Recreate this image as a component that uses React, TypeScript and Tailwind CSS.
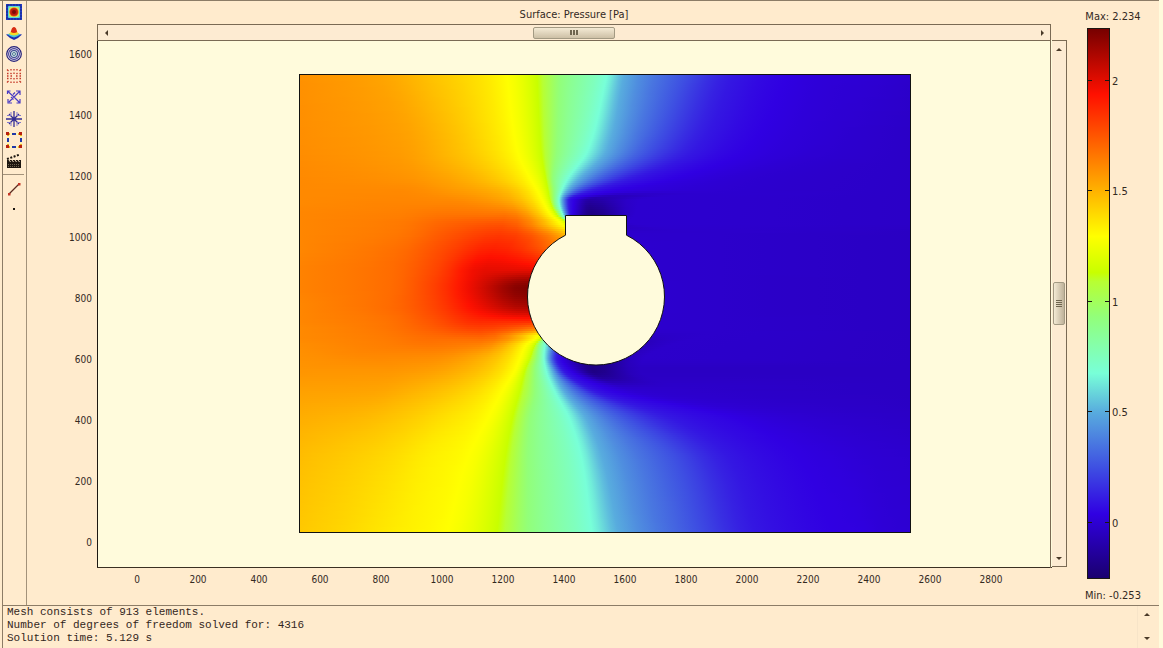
import type { ReactNode } from "react";

type Point = [x: number, value: number];
type Rgb = [number, number, number];

interface FieldRow {
  y: number;
  left: Point[];
  bands: number[];
  tail: Point[];
  // pressure on the body surface, where it differs from the first band
  edge?: number;
}

const P_MAX = 2.234;
const P_MIN = -0.253;

const FIELD_W = 611;
const FIELD_H = 458;
const STRIP = 2;

const COLOR_MAP: { value: number; rgb: Rgb }[] = [
  { value: 2.234, rgb: [118, 0, 0] },
  { value: 1.936, rgb: [255, 16, 0] },
  { value: 1.294, rgb: [255, 255, 0] },
  { value: 1.13, rgb: [200, 255, 0] },
  { value: 1.09, rgb: [184, 255, 50] },
  { value: 0.93, rgb: [146, 255, 122] },
  { value: 0.675, rgb: [120, 255, 216] },
  { value: 0.5, rgb: [88, 172, 222] },
  { value: 0.25, rgb: [62, 80, 226] },
  { value: 0.038, rgb: [48, 0, 226] },
  { value: -0.253, rgb: [26, 0, 110] },
];

const BAND_LEVELS = [1.294, 1.13, 0.93, 0.675, 0.5, 0.25, 0.1, 0.038];
const BEHIND_BODY = [280, 284, 288, 292, 296, 300, 304];

const ROWS: FieldRow[] = [
  { y: 0, left: [[0, 1.59], [80, 1.54], [130, 1.46], [170, 1.39]], bands: [207, 237, 260, 307, 324, 385, 433, 488], tail: [[530, 0.01], [570, 0], [611, -0.02]] },
  { y: 75, left: [[0, 1.6], [100, 1.56], [150, 1.48], [185, 1.4]], bands: [217, 241, 257, 288, 307, 350, 395, 445], tail: [[490, 0.01], [540, -0.01], [611, -0.03]] },
  { y: 105, left: [[0, 1.61], [100, 1.59], [150, 1.54], [195, 1.45]], bands: [231, 246, 253, 267, 278, 302, 328, 368], tail: [[405, 0.01], [460, -0.01], [611, -0.03]] },
  { y: 115, left: [[0, 1.61], [100, 1.61], [150, 1.57], [198, 1.5]], bands: [237, 248, 254, 262, 268, 280, 294, 318], tail: [[360, 0.01], [440, -0.01], [611, -0.03]] },
  { y: 125, left: [[0, 1.61], [100, 1.62], [150, 1.61], [200, 1.55]], bands: [242, 250, 254, 259, 262, 266, 269, 274], tail: [[290, -0.12], [340, -0.01], [611, -0.03]] },
  { y: 140, left: [[0, 1.62], [100, 1.64], [150, 1.67], [205, 1.67]], bands: [251, 257, 260, 263, 265, 268, 270, 273], tail: [[292, -0.2], [335, -0.01], [611, -0.03]] },
  { y: 147, left: [[0, 1.62], [98, 1.65], [150, 1.71], [203, 1.74]], bands: [259, 266, 268, 270, 272, 274, 276, 278], tail: [[296, -0.1], [330, -0.01], [611, -0.03]] },
  { y: 160, left: [[0, 1.62], [97, 1.66], [147, 1.75], [200, 1.83]], edge: 1.5, bands: [264, ...BEHIND_BODY], tail: [[310, -0.01], [420, -0.02], [611, -0.04]] },
  { y: 175, left: [[0, 1.62], [95, 1.68], [143, 1.78], [193, 1.9]], edge: 1.72, bands: [249, ...BEHIND_BODY], tail: [[310, 0], [420, -0.02], [611, -0.04]] },
  { y: 195, left: [[0, 1.63], [92, 1.69], [138, 1.8], [185, 1.99]], edge: 1.99, bands: [236, ...BEHIND_BODY], tail: [[310, 0], [420, -0.02], [611, -0.04]] },
  { y: 213, left: [[0, 1.63], [90, 1.69], [135, 1.81], [180, 2.02]], edge: 2.21, bands: [226, ...BEHIND_BODY], tail: [[310, 0.01], [420, -0.02], [611, -0.04]] },
  { y: 230, left: [[0, 1.62], [88, 1.69], [135, 1.8], [180, 1.98]], edge: 2.13, bands: [227, ...BEHIND_BODY], tail: [[310, 0.01], [420, -0.02], [611, -0.04]] },
  { y: 245, left: [[0, 1.62], [86, 1.67], [133, 1.76], [180, 1.88]], edge: 1.9, bands: [229, ...BEHIND_BODY], tail: [[310, 0], [420, -0.02], [611, -0.04]] },
  { y: 255, left: [[0, 1.61], [85, 1.66], [130, 1.72], [180, 1.79]], edge: 1.6, bands: [233, 256, 260, 264, 268, 272, 276, 280], tail: [[310, -0.01], [420, -0.02], [611, -0.04]] },
  { y: 262, left: [[0, 1.61], [85, 1.65], [130, 1.69], [182, 1.71]], bands: [236, 243, 246, 250, 254, 260, 265, 270], tail: [[305, -0.06], [400, -0.02], [611, -0.04]] },
  { y: 270, left: [[0, 1.6], [85, 1.64], [130, 1.66], [180, 1.63]], bands: [226, 235, 239, 245, 250, 256, 260, 265], tail: [[300, -0.15], [370, -0.02], [611, -0.04]] },
  { y: 283, left: [[0, 1.59], [80, 1.61], [130, 1.6], [175, 1.53]], bands: [220, 230, 237, 244, 248, 253, 257, 262], tail: [[292, -0.2], [345, -0.02], [611, -0.04]] },
  { y: 295, left: [[0, 1.58], [80, 1.58], [125, 1.56], [165, 1.5]], bands: [215, 225, 235, 246, 252, 258, 263, 270], tail: [[293, -0.2], [340, -0.04], [611, -0.04]] },
  { y: 315, left: [[0, 1.55], [75, 1.54], [115, 1.5], [155, 1.44]], bands: [203, 220, 235, 254, 263, 280, 292, 310], tail: [[335, -0.01], [390, -0.02], [611, -0.04]] },
  { y: 345, left: [[0, 1.51], [60, 1.48], [100, 1.44], [140, 1.38]], bands: [187, 212, 230, 270, 287, 330, 375, 440], tail: [[480, 0.01], [530, -0.01], [611, -0.03]] },
  { y: 385, left: [[0, 1.47], [50, 1.43], [90, 1.39], [125, 1.34]], bands: [167, 205, 228, 282, 303, 375, 430, 500], tail: [[535, 0.02], [575, 0], [611, -0.01]] },
  { y: 458, left: [[0, 1.44], [45, 1.4], [80, 1.36], [110, 1.33]], bands: [147, 197, 228, 292, 318, 397, 455, 533], tail: [[560, 0.03], [585, 0.01], [611, 0]] },
];

function toPoints(row: FieldRow): Point[] {
  const bands = row.bands.map(
    (x, i): Point => [x, i === 0 && row.edge !== undefined ? row.edge : BAND_LEVELS[i]],
  );
  return [...row.left, ...bands, ...row.tail];
}

// Monotone cubic interpolation, so the contours do not overshoot
function interpolate(xs: number[], ys: number[]) {
  const n = xs.length;
  const h = xs.slice(1).map((x, i) => Math.max(x - xs[i], 0.001));
  const d = h.map((step, i) => (ys[i + 1] - ys[i]) / step);
  const m = xs.map((_, i) => {
    if (i === 0) return d[0];
    if (i === n - 1) return d[n - 2];
    if (d[i - 1] * d[i] <= 0) return 0;
    const w1 = 2 * h[i] + h[i - 1];
    const w2 = h[i] + 2 * h[i - 1];
    return (w1 + w2) / (w1 / d[i - 1] + w2 / d[i]);
  });
  return (x: number) => {
    let i = 0;
    while (i < n - 2 && x > xs[i + 1]) i++;
    const t = (x - xs[i]) / h[i];
    const t2 = t * t;
    const t3 = t2 * t;
    return (
      (2 * t3 - 3 * t2 + 1) * ys[i] +
      (t3 - 2 * t2 + t) * h[i] * m[i] +
      (3 * t2 - 2 * t3) * ys[i + 1] +
      (t3 - t2) * h[i] * m[i + 1]
    );
  };
}

function colorOf(value: number): string {
  const v = Math.min(P_MAX, Math.max(P_MIN, value));
  let i = 0;
  while (i < COLOR_MAP.length - 2 && v < COLOR_MAP[i + 1].value) i++;
  const a = COLOR_MAP[i];
  const b = COLOR_MAP[i + 1];
  const t = (a.value - v) / (a.value - b.value);
  const [r, g, bl] = a.rgb.map((c, k) => Math.round(c + (b.rgb[k] - c) * t));
  return `rgb(${r},${g},${bl})`;
}

function buildStrips() {
  const rows = ROWS.map(toPoints);
  const ys = ROWS.map((r) => r.y);
  const columns = rows[0].map((_, c) => ({
    x: interpolate(ys, rows.map((r) => r[c][0])),
    value: interpolate(ys, rows.map((r) => r[c][1])),
  }));

  const strips = [];
  for (let y = 0; y < FIELD_H; y += STRIP) {
    const xs = columns.map((c) => c.x(y + STRIP / 2));
    const values = columns.map((c) => c.value(y + STRIP / 2));
    const valueAt = interpolate(xs, values);
    const stops = [];
    for (let i = 0; i < xs.length - 1; i++) {
      for (let k = 0; k < 4; k++) {
        const x = xs[i] + ((xs[i + 1] - xs[i]) * k) / 4;
        stops.push({ offset: x / FIELD_W, color: colorOf(valueAt(x)) });
      }
    }
    stops.push({ offset: 1, color: colorOf(values[values.length - 1]) });
    strips.push({ y, stops });
  }
  return strips;
}

const STRIPS = buildStrips();

const X_TICKS = Array.from({ length: 15 }, (_, i) => i * 200);
const Y_TICKS = Array.from({ length: 9 }, (_, i) => i * 200);
const LEGEND_TICKS = [2, 1.5, 1, 0.5, 0];

function PressurePlot() {
  return (
    <svg
      viewBox="0 0 1025 565"
      className="block h-auto min-w-0 flex-1 font-['DejaVu_Sans_Condensed','Noto_Sans',sans-serif] text-[10px]"
      role="img"
      aria-label="Pressure surface plot"
    >
      <defs>
        {STRIPS.map((s) => (
          <linearGradient
            key={s.y}
            id={`strip-${s.y}`}
            gradientUnits="userSpaceOnUse"
            x1="0"
            y1="0"
            x2={FIELD_W}
            y2="0"
          >
            {s.stops.map((stop, i) => (
              <stop key={i} offset={stop.offset} stopColor={stop.color} />
            ))}
          </linearGradient>
        ))}
      </defs>

      <rect x="70" y="0" width="955" height="528" fill="#fffbdc" />
      <path d="M70.5 0V528" stroke="#1c1813" />
      <path d="M70 527.5H1025" stroke="#3a3022" />
      <path d="M70 0.5H1024" stroke="#7a6a54" />
      <path d="M1023.5 0V528" stroke="#7a6a54" />

      <g transform="translate(273 35)">
        <g shapeRendering="crispEdges">
          {STRIPS.map((s) => (
            <rect key={s.y} y={s.y} width={FIELD_W} height={STRIP} fill={`url(#strip-${s.y})`} />
          ))}
        </g>
        <rect x="-0.5" y="-0.5" width="611" height="458" fill="none" stroke="#111" />
        <path
          d="M265.5 140.5H326.5V160.2A68.5 68.5 0 1 1 265.5 160.2Z"
          fill="#fffbdc"
          stroke="#111"
        />
      </g>

      <g fill="#33291f">
        {Y_TICKS.map((t, i) => (
          <text key={t} x="65" y={506 - i * 61} textAnchor="end">
            {t}
          </text>
        ))}
        {X_TICKS.map((t, i) => (
          <text key={t} x={110 + i * 61} y="543" textAnchor="middle">
            {t}
          </text>
        ))}
      </g>
    </svg>
  );
}

function Legend() {
  return (
    <svg
      viewBox="0 0 92 604"
      className="block w-[92px] shrink-0 self-start font-['DejaVu_Sans_Condensed','Noto_Sans',sans-serif] text-[11px]"
      role="img"
      aria-label="Pressure colour scale"
    >
      <defs>
        <linearGradient id="legend" x1="0" y1="0" x2="0" y2="1">
          {COLOR_MAP.map((c) => (
            <stop
              key={c.value}
              offset={(P_MAX - c.value) / (P_MAX - P_MIN)}
              stopColor={`rgb(${c.rgb.join(",")})`}
            />
          ))}
        </linearGradient>
      </defs>
      <rect x="20.5" y="27.5" width="22" height="550" fill="url(#legend)" stroke="#1c1813" />
      <g fill="#33291f">
        <text x="46" y="19" textAnchor="middle">Max: {P_MAX}</text>
        {LEGEND_TICKS.map((t) => {
          const y = Math.round(27 + ((P_MAX - t) / (P_MAX - P_MIN)) * 550);
          return (
            <g key={t}>
              <path d={`M21 ${y}.5H25M38 ${y}.5H42`} stroke="#1c1813" />
              <text x="45" y={y + 5}>{t}</text>
            </g>
          );
        })}
        <text x="46" y="598" textAnchor="middle">Min: {P_MIN}</text>
      </g>
    </svg>
  );
}

function Arrow({ label, d }: { label: string; d: string }) {
  return (
    <button type="button" aria-label={label} className="flex size-4 shrink-0 items-center justify-center">
      <svg viewBox="0 0 8 8" className="size-2" fill="#4a3a28">
        <path d={d} />
      </svg>
    </button>
  );
}

const UP = "M1 6L4 3L7 6Z";
const DOWN = "M1 3L4 6L7 3Z";
const LEFT = "M6 1L3 4L6 7Z";
const RIGHT = "M3 1L6 4L3 7Z";

function HorizontalScroll() {
  return (
    <div className="ml-[70px] mr-4 flex h-4 items-center justify-between border border-b-0 border-[#7a6a54] bg-[#fdebd2]">
      <Arrow label="Scroll left" d={LEFT} />
      <div className="flex h-3 w-[82px] items-center justify-center gap-px rounded-xs border border-[#a39a83] bg-linear-to-b from-[#f4ead4] to-[#cdc0a6]">
        <span className="h-[5px] w-0.5 bg-[#6f654f]" />
        <span className="h-[5px] w-0.5 bg-[#6f654f]" />
        <span className="h-[5px] w-0.5 bg-[#6f654f]" />
      </div>
      <Arrow label="Scroll right" d={RIGHT} />
    </div>
  );
}

function VerticalScroll() {
  return (
    <div className="mb-[38px] flex w-[15px] shrink-0 flex-col items-center justify-between border border-l-0 border-[#7a6a54] bg-[#fdebd2]">
      <Arrow label="Scroll up" d={UP} />
      <div className="flex h-[43px] w-3 flex-col items-center justify-center gap-px rounded-xs border border-[#a39a83] bg-linear-to-r from-[#f4ead4] to-[#bfb29a]">
        <span className="h-px w-1.5 bg-[#6f654f]" />
        <span className="h-px w-1.5 bg-[#6f654f]" />
        <span className="h-px w-1.5 bg-[#6f654f]" />
        <span className="h-px w-1.5 bg-[#6f654f]" />
      </div>
      <Arrow label="Scroll down" d={DOWN} />
    </div>
  );
}

function Tool({ label, children }: { label: string; children: ReactNode }) {
  return (
    <button type="button" aria-label={label} title={label} className="flex flex-1 items-center justify-center">
      <svg viewBox="0 0 16 16" className="size-4" fill="none">
        {children}
      </svg>
    </button>
  );
}

function Toolbar() {
  return (
    <div role="toolbar" aria-label="Plot type" className="flex w-6 shrink-0 flex-col border-r border-[#a3927a] pr-0.5">
      <div className="flex h-[171px] flex-col">
        <Tool label="Surface plot">
          <rect width="16" height="16" fill="#2438c8" />
          <rect x="1" y="1" width="14" height="14" fill="none" stroke="#123080" strokeDasharray="2 1" />
          <rect x="2" y="2" width="12" height="12" rx="1" fill="#58d8d8" />
          <rect x="3" y="3" width="10" height="10" rx="2" fill="#d8ec50" />
          <circle cx="8" cy="8" r="4.6" fill="#e06818" />
          <circle cx="8" cy="8" r="3.8" fill="#c01c10" />
          <circle cx="8" cy="8" r="2" fill="#7c0c08" />
        </Tool>
        <Tool label="Height plot">
          <path d="M0 9.5L4 9H12L16 9.5L12 13L8 15L4 13Z" fill="#1c2cb0" />
          <path d="M1.5 9.5L4 8H12L14.5 9.5L11 11.5L8 12.5L5 11.5Z" fill="#48c8d8" />
          <path d="M8 3C5.5 3.5 5.5 7 3 8.8C6 11 10 11 13 8.8C10.5 7 10.5 3.5 8 3Z" fill="#f4dc28" />
          <path d="M8 2C5.5 2.5 5.5 5 4.8 7C7 8.2 9 8.2 11.2 7C10.5 5 10.5 2.5 8 2Z" fill="#d82c14" />
        </Tool>
        <Tool label="Contour plot">
          <circle cx="8" cy="8" r="7.3" stroke="#252078" strokeWidth="1.2" fill="#e8e4ec" />
          <circle cx="8" cy="8" r="5.4" stroke="#403c98" strokeWidth="1.1" />
          <circle cx="8" cy="8" r="3.5" stroke="#3c4890" strokeWidth="1.1" fill="#c8dce0" />
          <circle cx="8" cy="8" r="1.5" stroke="#507898" fill="#d8f0e0" />
        </Tool>
        <Tool label="Arrow plot">
          <g stroke="#c43828" strokeWidth="1.3">
            <path d="M1 1.5L2.5 3M5 1V2.5M8 1V2.5M11 1V2.5M15 1.5L13.5 3" />
            <path d="M1 5.5H2.5M4.5 5L5.5 6M8 4.5V6M11.5 5L10.5 6M13.5 5.5H15" />
            <path d="M1 8H2.5M4.5 8H6M10 8H11.5M13.5 8H15" />
            <path d="M1 10.5H2.5M4.5 11L5.5 10M8 10V11.5M11.5 11L10.5 10M13.5 10.5H15" />
            <path d="M1 14.5L2.5 13M5 13.5V15M8 13.5V15M11 13.5V15M15 14.5L13.5 13" />
          </g>
        </Tool>
        <Tool label="Deformed shape plot">
          <g stroke="#4a3cc4" strokeWidth="1.2">
            <path d="M1.5 5V2H4.5M2 2.5L8 8M10 2H14V6M14 2L3 13M2 10V14H6M8 8L13.5 13.5M14 10V14H10.5M7 5.5L9 3.5M5 8L7.5 10.5" />
          </g>
        </Tool>
        <Tool label="Streamline plot">
          <g stroke="#322c94" strokeWidth="1.3">
            <path d="M8 0V16M0 8H16M3 3L13 13M13 3L3 13" />
            <path d="M1 4.5H5V1M11 1V4.5H15M1 11.5H5V15M11 15V11.5H15" stroke="#8078cc" strokeWidth="1" />
          </g>
        </Tool>
        <Tool label="Boundary plot">
          <g shapeRendering="crispEdges">
            <path d="M0 1.5H16M0 14.5H16M1.5 0V16M14.5 0V16" stroke="#fff4b0" strokeWidth="2" />
            <path d="M6 1.5H10M6 14.5H10M1.5 6V10M14.5 6V10" stroke="#2038a8" strokeWidth="2" />
            <path d="M3 1.5H4M12 1.5H13M3 14.5H4M12 14.5H13M1.5 3V4M14.5 3V4M1.5 12V13M14.5 12V13" stroke="#e8b020" strokeWidth="2" />
            <path d="M0 0H3V3H0ZM13 0H16V3H13ZM0 13H3V16H0ZM13 13H16V16H13Z" fill="#b82010" />
          </g>
        </Tool>
        <Tool label="Animate">
          <path d="M1 6L14 1.5" stroke="#1c1610" strokeWidth="2" strokeDasharray="2 1.5" />
          <rect x="1" y="7" width="14" height="8" fill="#1c1610" />
          <path d="M3 7L4.5 9M6 7L7.5 9M9 7L10.5 9M12 7L13.5 9" stroke="#f4e2c4" />
          <path d="M2 11.5H14M2 13.5H14" stroke="#6c6250" strokeDasharray="1 1" />
        </Tool>
      </div>
      <hr className="mt-0.5 border-[#a3927a]" />
      <div className="mt-1 flex h-10 flex-col">
        <Tool label="Line">
          <path d="M3 13L13 3" stroke="#5a2c20" strokeWidth="1.2" />
          <path d="M2 12H4.5V14.5H2ZM12 2H14.5V4.5H12Z" fill="#c43424" />
        </Tool>
        <Tool label="Point">
          <rect x="7" y="7" width="2" height="2" fill="#1c1610" />
        </Tool>
      </div>
    </div>
  );
}

const LOG_LINES = [
  "Mesh consists of 913 elements.",
  "Number of degrees of freedom solved for: 4316",
  "Solution time: 5.129 s",
];

function MessageLog() {
  return (
    <div className="flex grow justify-between border-t border-[#8c7c66]">
      <div
        role="log"
        className="whitespace-pre pl-1 font-['Liberation_Mono',monospace] text-[11px] leading-[13px] text-[#33261c]"
      >
        {LOG_LINES.map((line) => (
          <p key={line}>{line}</p>
        ))}
      </div>
      <div className="mr-1 flex w-[18px] flex-col items-center justify-between border-l border-[#f7e4c8] pb-0.5">
        <Arrow label="Scroll log up" d={UP} />
        <Arrow label="Scroll log down" d={DOWN} />
      </div>
    </div>
  );
}

export default function App() {
  return (
    <div className="flex min-h-screen bg-[#fffbdc] pr-1">
      <div className="flex min-h-screen min-w-0 flex-1 flex-col border-t border-[#8c7c66] bg-[#ffebcd] pl-0.5">
        <div className="flex grow flex-col border-l border-[#8c7c66]">
          <main className="flex">
            <Toolbar />
            <section className="flex min-w-0 flex-1 flex-col">
              <h1 className="flex h-[23px] items-center justify-center pl-[70px] pr-4 pt-1 font-['DejaVu_Sans_Condensed','Noto_Sans',sans-serif] text-[11px] leading-4 text-[#33291f]">
                Surface: Pressure [Pa]
              </h1>
              <HorizontalScroll />
              <div className="flex">
                <PressurePlot />
                <VerticalScroll />
              </div>
            </section>
            <Legend />
          </main>
          <MessageLog />
        </div>
      </div>
    </div>
  );
}
